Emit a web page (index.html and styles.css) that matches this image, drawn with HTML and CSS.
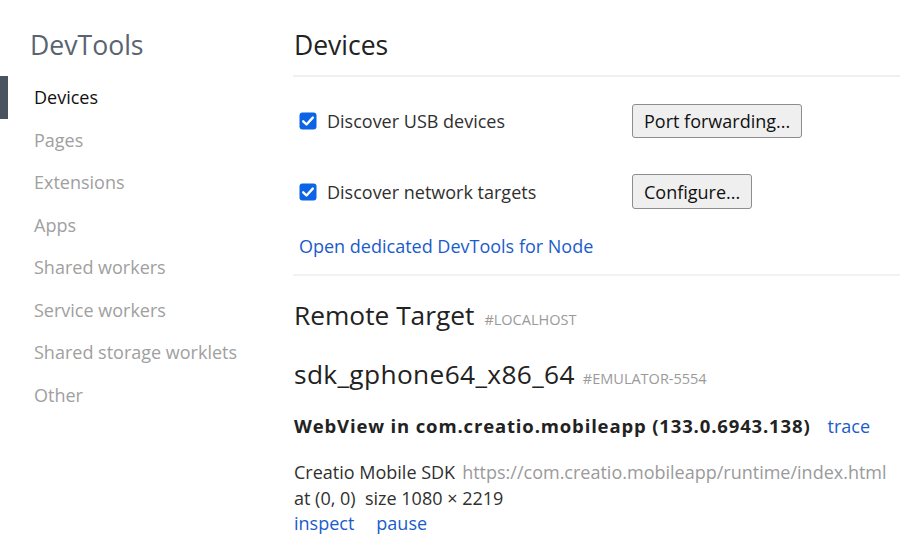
FILE: index.html
```html
<!DOCTYPE html>
<html>
<head>
<meta charset="utf-8">
<link rel="stylesheet" href="styles.css">
</head>
<body>
<div class="app">
  <aside class="sidebar">
    <h1 class="brand">DevTools</h1>
    <nav class="nav">
      <div class="nav-item selected">Devices</div>
      <div class="nav-item">Pages</div>
      <div class="nav-item">Extensions</div>
      <div class="nav-item">Apps</div>
      <div class="nav-item">Shared workers</div>
      <div class="nav-item">Service workers</div>
      <div class="nav-item">Shared storage worklets</div>
      <div class="nav-item">Other</div>
    </nav>
  </aside>
  <main class="content">
    <header class="page-header"><h2 class="page-title">Devices</h2></header>
    <section class="settings">
      <div class="setting-row row-usb">
        <label class="check"><span class="box"><svg viewBox="0 0 18 18" width="18" height="18"><rect x="0.5" y="0.5" width="17" height="17" rx="3" fill="#0b63e5"/><path d="M4.2 9.3 L7.5 12.5 L13.8 5.6" fill="none" stroke="#fff" stroke-width="2.4" stroke-linecap="round" stroke-linejoin="round"/></svg></span>Discover USB devices</label>
        <button class="btn">Port forwarding...</button>
      </div>
      <div class="setting-row row-net">
        <label class="check"><span class="box"><svg viewBox="0 0 18 18" width="18" height="18"><rect x="0.5" y="0.5" width="17" height="17" rx="3" fill="#0b63e5"/><path d="M4.2 9.3 L7.5 12.5 L13.8 5.6" fill="none" stroke="#fff" stroke-width="2.4" stroke-linecap="round" stroke-linejoin="round"/></svg></span>Discover network targets</label>
        <button class="btn">Configure...</button>
      </div>
      <div class="node-link"><a class="link">Open dedicated DevTools for Node</a></div>
    </section>
    <section class="targets">
      <div class="target-title">Remote Target<span class="tag">#LOCALHOST</span></div>
      <div class="device-title"><span class="device-name">sdk_gphone64_x86_64</span><span class="tag tag-device">#EMULATOR-5554</span></div>
      <div class="browser-title"><b>WebView in com.creatio.mobileapp (133.0.6943.138)</b><a class="link trace">trace</a></div>
      <div class="target">
        <div class="target-line"><span class="t-name">Creatio Mobile SDK</span><span class="t-url">https://com.creatio.mobileapp/runtime/index.html</span></div>
        <div class="target-line">at (0, 0)&nbsp; size 1080 × 2219</div>
        <div class="target-line actions"><a class="link">inspect</a><a class="link">pause</a></div>
      </div>
    </section>
  </main>
</div>
</body>
</html>
```
FILE: styles.css
```css
* { box-sizing: border-box; }
html, body { margin: 0; padding: 0; background: #fff; }
body {
  font-family: "Open Sans", "Noto Sans", sans-serif;
  color: #303030;
  width: 900px;
  height: 546px;
  overflow: hidden;
}
.app { display: flex; }
.sidebar { width: 293px; flex: none; }
.brand {
  margin: 0;
  padding: 28px 0 0 30px;
  height: 76px;
  font-weight: 400;
  font-size: 26.6px;
  line-height: 34px;
  color: #5a6470;
}
.nav { display: flex; flex-direction: column; }
.nav-item {
  height: 42.5px;
  line-height: 43px;
  font-size: 18px;
  color: #a0a0a0;
  border-left: 8px solid transparent;
  padding-left: 26px;
}
.nav-item.selected { color: #111; border-left-color: #4a5360; }
.content { flex: 1; }
.page-header {
  height: 77px;
  border-bottom: 2px solid #efefef;
  padding: 28px 0 0 1px;
}
.page-title {
  margin: 0;
  font-weight: 400;
  font-size: 26.5px;
  line-height: 34px;
  color: #222;
}
.settings { border-bottom: 2px solid #f2f2f2; padding-left: 6px; }
.setting-row { display: flex; align-items: center; height: 35px; }
.row-usb { margin-top: 26px; }
.row-net { margin-top: 36px; }
.check { display: flex; align-items: center; width: 333px; font-size: 18px; color: #303030; }
.box { display: flex; width: 18px; height: 18px; margin-right: 10px; }
.btn {
  font-family: inherit;
  font-size: 18px;
  color: #111;
  background: #efefef;
  border: 1px solid #8d8d8d;
  border-radius: 3px;
  height: 34px;
  padding: 0 11px;
}
.row-net .btn { height: 35px; }
.node-link { height: 65px; padding-top: 23px; font-size: 18px; line-height: 28px; }
.link { color: #1a5ccc; text-decoration: none; }
.targets { padding-left: 1px; }
.target-title { margin-top: 21px; height: 36px; font-size: 26.3px; line-height: 36px; color: #222; }
.device-title { margin-top: 23px; height: 36px; font-size: 26.3px; line-height: 36px; color: #222; }
.device-name { letter-spacing: 0.35px; }
.tag { font-size: 14.5px; line-height: 1; color: #9a9a9a; text-transform: uppercase; margin-left: 10px; }
.tag-device { margin-left: 8px; }
.browser-title { margin-top: 21px; height: 26px; font-size: 18.5px; line-height: 26px; color: #222; }
.browser-title b { font-weight: 700; letter-spacing: 0.85px; }
.trace { margin-left: 17px; font-size: 18px; }
.target { margin-top: 21px; font-size: 18px; }
.target-line { line-height: 25.5px; height: 25.5px; }
.t-url { color: #9a9a9a; margin-left: 7px; }
.actions .link + .link { margin-left: 22px; }
```
